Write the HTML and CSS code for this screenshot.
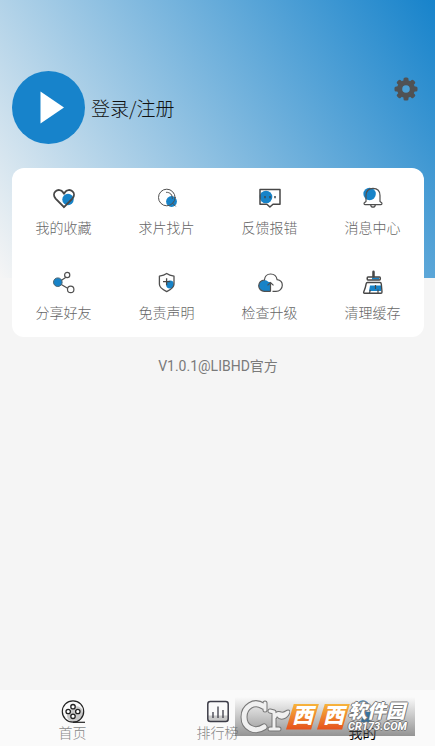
FILE: index.html
```html
<!DOCTYPE html>
<html lang="zh-CN">
<head>
<meta charset="utf-8">
<meta name="viewport" content="width=device-width, initial-scale=1">
<title>我的</title>
<link rel="stylesheet" href="styles.css">
</head>
<body>
<main class="page">
  <header class="profile">
    <a class="login" href="#">
      <svg class="avatar" viewBox="0 0 73 73" aria-hidden="true"><circle cx="36.500" cy="36.500" r="36.500" fill="#1783cb"/><path d="M28.500 20.500v32l23.500-16z" fill="#fff"/></svg>
      <span>登录/注册</span>
    </a>
    <button class="settings" type="button" aria-label="设置">
      <svg viewBox="0 0 24 24" aria-hidden="true"><g fill="#505254"><rect x="9.500" y="0.500" width="5" height="23" rx="1.600"/><rect x="0.500" y="9.500" width="23" height="5" rx="1.600"/><g transform="rotate(45 12 12)"><rect x="9.500" y="0.500" width="5" height="23" rx="1.600"/><rect x="0.500" y="9.500" width="23" height="5" rx="1.600"/></g><circle cx="12" cy="12" r="9"/></g><circle cx="12" cy="12" r="3.800" fill="#4b9fd4"/></svg>
    </button>
  </header>

  <nav class="card" aria-label="功能">
    <a class="item" href="#">
      <svg class="icon" viewBox="0 0 26 26"><circle cx="17" cy="14.500" r="5.700" fill="#1783c8"/><path d="M13 22.200 4.600 13.600C2.500 11.300 2.600 8.200 4.500 6.400c2.300-2.100 5.900-1.600 7.500.8l1 1.500 1-1.500c1.600-2.400 5.200-2.900 7.500-.8 1.900 1.800 2 4.900-.1 7.200z" fill="none" stroke="#474747" stroke-width="1.900" stroke-linejoin="round"/></svg>
      <span>我的收藏</span>
    </a>
    <a class="item" href="#">
      <svg class="icon" viewBox="0 0 26 26"><circle cx="17.500" cy="16.500" r="5.400" fill="#1783c8"/><g fill="none" stroke="#505050" stroke-linecap="round"><circle cx="12.800" cy="12.500" r="8.300"/><path d="M12.500 7.300c3.500-.2 6.200 2.600 5.900 6.200"/><path d="m18.700 18.400 2.700 2.700"/></g></svg>
      <span>求片找片</span>
    </a>
    <a class="item" href="#">
      <svg class="icon" viewBox="0 0 26 26"><circle cx="9" cy="12" r="6.300" fill="#1783c8"/><path d="M3 4.500h20v14.700h-7L12.900 22l-3-2.800H3z" fill="none" stroke="#474747" stroke-width="1.500" stroke-linejoin="round"/><path d="M8 11v2.200M13 11v2.200M18 11v2.200" stroke="#3d4a52" stroke-width="1.500"/></svg>
      <span>反馈报错</span>
    </a>
    <a class="item" href="#">
      <svg class="icon" viewBox="0 0 26 26"><circle cx="9.600" cy="9" r="6.200" fill="#1783c8"/><g fill="none" stroke="#505050" stroke-width="1.200" stroke-linejoin="round"><path d="M6 16.500V10.500c0-4.500 2.800-7.200 7-7.200s7 2.700 7 7.200v6l1.600 1.200c.7 1 .3 2-.8 2H5.200c-1.100 0-1.500-1-.8-2z"/><path d="M10.700 19.900c.2 3 4.400 3 4.600 0"/></g></svg>
      <span>消息中心</span>
    </a>
    <a class="item" href="#">
      <svg class="icon" viewBox="0 0 26 26"><path d="m9 11.300 6-4M9 13.700l8 4.800" stroke="#505050" stroke-width="1.200"/><circle cx="6.800" cy="12.200" r="4.300" fill="#1783c8" stroke="#4b6472"/><g fill="#fff" stroke="#505050" stroke-width="1.200"><circle cx="16.200" cy="5" r="2.600"/><circle cx="19.700" cy="19.400" r="3.200"/></g></svg>
      <span>分享好友</span>
    </a>
    <a class="item" href="#">
      <svg class="icon" viewBox="0 0 26 26"><circle cx="16" cy="14.500" r="3.900" fill="#1783c8"/><path d="M12.700 3.500c2.200 1.700 4.600 2.300 7.300 2.700v8c0 3.500-3.600 5.600-7.300 7.400-3.700-1.800-7.300-3.900-7.300-7.400v-8c2.700-.4 5.100-1 7.300-2.700z" fill="none" stroke="#505050" stroke-width="1.300" stroke-linejoin="round"/><path d="M9 11.700h7.200M12.600 8.200v7" stroke="#474747" stroke-width="1.300"/></svg>
      <span>免责声明</span>
    </a>
    <a class="item" href="#">
      <svg class="icon" viewBox="0 0 26 26"><circle cx="7.300" cy="15.700" r="5.600" fill="#1783c8"/><path d="M7.300 12h6.200v9.400H7.300z" fill="#1783c8"/><path d="M13.500 21.400H7.300c-3 0-5.600-2.500-5.600-5.600 0-3.200 2.500-5.800 5.700-5.800C7.800 6.600 10.200 4 13.600 4c3.300 0 5.900 2.300 6.500 5.600 3.200.4 5.200 2.700 5.200 5.700 0 3.400-2.700 6.100-6.300 6.100h-3.500M13.500 21.400v-8.700m-3 2.700 3-2.900 3 2.900" fill="none" stroke="#505050" stroke-width="1.200"/></svg>
      <span>检查升级</span>
    </a>
    <a class="item" href="#">
      <svg class="icon" viewBox="0 0 26 26"><path d="M10 15.500h11V21H9z" fill="#1783c8"/><path d="M12 8.500h7" stroke="#1783c8" stroke-width="2"/><g fill="none" stroke="#474747" stroke-width="1.400" stroke-linejoin="round"><path d="M13.500 7V2M8 7h11.500c1.200 0 1.200 3 0 3H8c-1.200 0-1.200-3 0-3z"/><path d="M7.500 12.500H20c1 0 1.200.6 1.300 1.500l.7 8c0 .8-.4 1.200-1 1.200H4.500c-.8 0-1-.5-.8-1.200C5 19 5.800 16.500 6.200 13.700c.1-.8.500-1.200 1.300-1.200z"/><path d="M15.500 15v4M18 23v-3.500M9.500 23l.8-3" stroke-width="1.200"/></g><path d="M13.500 6.500V1.800" stroke="#474747" stroke-width="2.400" stroke-linecap="round"/></svg>
      <span>清理缓存</span>
    </a>
  </nav>
  <p class="version">V1.0.1@LIBHD官方</p>
</main>

<footer class="footer">
  <nav class="tabs" aria-label="主导航">
    <a class="tab" href="#">
      <svg class="tab-icon" viewBox="0 0 26 26"><path d="M15 7c5 0 8 3 8 7s-3 8-8 9-8-3-8-7z" fill="#c9c9c9"/><g fill="none" stroke="#222" stroke-width="1.200"><circle cx="13" cy="12.500" r="10.700"/><path d="M13 23.300h12"/></g><g fill="#fff" stroke="#222" stroke-width="1.300"><circle cx="13" cy="7.700" r="2.200"/><circle cx="8.200" cy="12.500" r="2.200"/><circle cx="17.800" cy="12.500" r="2.200"/><circle cx="13" cy="17.300" r="2.200"/></g></svg>
      <span>首页</span>
    </a>
    <a class="tab" href="#">
      <svg class="tab-icon" viewBox="0 0 26 26"><path d="M3 16.500h20v6H3z" fill="#c9c9c9"/><rect x="2.800" y="2.600" width="20.400" height="20" rx="2.500" fill="none" stroke="#3c3c48" stroke-width="1.500"/><path d="M8 13v6M13 7.500V19M18 11v8" stroke="#3c3c48" stroke-width="1.300"/></svg>
      <span>排行榜</span>
    </a>
    <a class="tab active" href="#" aria-current="page">
      <svg class="tab-icon" viewBox="0 0 26 26"><circle cx="13" cy="7.500" r="5.500" fill="none" stroke="#4d8cbc" stroke-width="1.500"/><path d="M13 13h7v10h-9z" fill="#2f80bd"/></svg>
      <span>我的</span>
    </a>
  </nav>
  <div class="watermark">
    <svg class="emblem" viewBox="0 0 50 36" aria-hidden="true"><g fill="none" stroke-linecap="round" stroke-linejoin="round"><g stroke="#777"><path d="M23 7C14 1 4 8 4 18c0 11 11 16 20 10" stroke-width="7"/><path d="M25 4v7M30 12l4 1v17m-4 0h9M35 18c1-4 4-4 6-3 3 1 5-1 7-2-2 5-7 7-10 3" stroke-width="5"/></g><g stroke="#f0f0f0"><path d="M23 7C14 1 4 8 4 18c0 11 11 16 20 10" stroke-width="5"/><path d="M25 4v7M30 12l4 1v17m-4 0h9M35 18c1-4 4-4 6-3 3 1 5-1 7-2-2 5-7 7-10 3" stroke-width="3"/></g></g></svg>
    <span class="tiles"><b>西</b><b>西</b></span>
    <span class="brand"><b>软件园</b><small>CR173.COM</small></span>
  </div>
</footer>
</body>
</html>
```
FILE: styles.css
```css
* {
  box-sizing: border-box;
}

body {
  display: flex;
  flex-direction: column;
  min-height: 100vh;
  margin: 0;
  background: #f5f5f5;
  color: #666;
  font-family: Roboto, "Noto Sans CJK SC", sans-serif;
  font-size: 14px;
  font-weight: 300;
  line-height: 20px;
}

a {
  color: inherit;
  text-decoration: none;
}

svg {
  display: block;
}

.page {
  flex: 1;
  padding: 71px 11px 0 12px;
  background: linear-gradient(56deg, #f5f5f5, #86bce0 50%, #1783cb) no-repeat;
  background-size: 100% 278px;
}

.profile {
  display: flex;
  justify-content: space-between;
  align-items: flex-start;
}

.login {
  display: flex;
  align-items: center;
  gap: 6px;
  color: #111;
  font-family: "Noto Sans CJK SC", sans-serif;
  font-size: 19px;
  line-height: 28px;
}

.avatar {
  width: 73px;
  height: 73px;
}

.settings {
  margin: 6px 6px 0 0;
  padding: 0;
  border: 0;
  background: none;
}

.settings svg {
  width: 24px;
  height: 24px;
}

.card {
  display: grid;
  grid-template-columns: repeat(4, 1fr);
  row-gap: 32px;
  margin-top: 24px;
  padding: 17px 0 14px;
  border-radius: 12px;
  background: #fff;
}

.item {
  display: flex;
  flex-direction: column;
  align-items: center;
  gap: 8px;
  line-height: 19px;
}

.icon {
  width: 26px;
  height: 26px;
}

.version {
  margin: 19px 0;
  font-weight: 400;
  color: #7a7a7a;
  text-align: center;
}

.footer {
  position: relative;
  background: #fafafa;
}

.tabs {
  display: grid;
  grid-template-columns: repeat(3, 1fr);
  padding: 9px 0 5px;
}

.tab {
  display: flex;
  flex-direction: column;
  align-items: center;
  color: #888;
  line-height: 16px;
}

.tab.active {
  color: #000;
  font-weight: 400;
}

.tab-icon {
  width: 26px;
  height: 26px;
}

/* Site badge laid over the tab bar */
.watermark {
  position: absolute;
  right: 20px;
  bottom: 10px;
  display: flex;
  align-items: center;
  width: 180px;
  height: 39px;
  padding-left: 5px;
  background: linear-gradient(rgba(220, 220, 220, 0), rgba(80, 80, 80, 0.6));
}

.emblem {
  flex: none;
  width: 50px;
  height: 36px;
}

.tiles {
  display: flex;
  margin-left: -4px;
}

.tiles b {
  width: 33px;
  height: 26px;
  margin-right: -2px;
  background: linear-gradient(#f7b43c, #e5501c);
  clip-path: polygon(24% 0, 100% 0, 76% 100%, 0 100%);
  color: #fff;
  font-size: 21px;
  font-style: italic;
  font-weight: 900;
  line-height: 25px;
  text-align: center;
}

.brand {
  display: flex;
  flex-direction: column;
  color: #fff;
  font-style: italic;
  text-shadow: 1px 0 #777, -1px 0 #777, 0 1px #777, 0 -1px #777;
  white-space: nowrap;
}

.brand b {
  font-size: 19px;
  font-weight: 900;
  line-height: 19px;
}

.brand small {
  font-size: 11px;
  font-weight: 700;
  line-height: 11px;
}
```
